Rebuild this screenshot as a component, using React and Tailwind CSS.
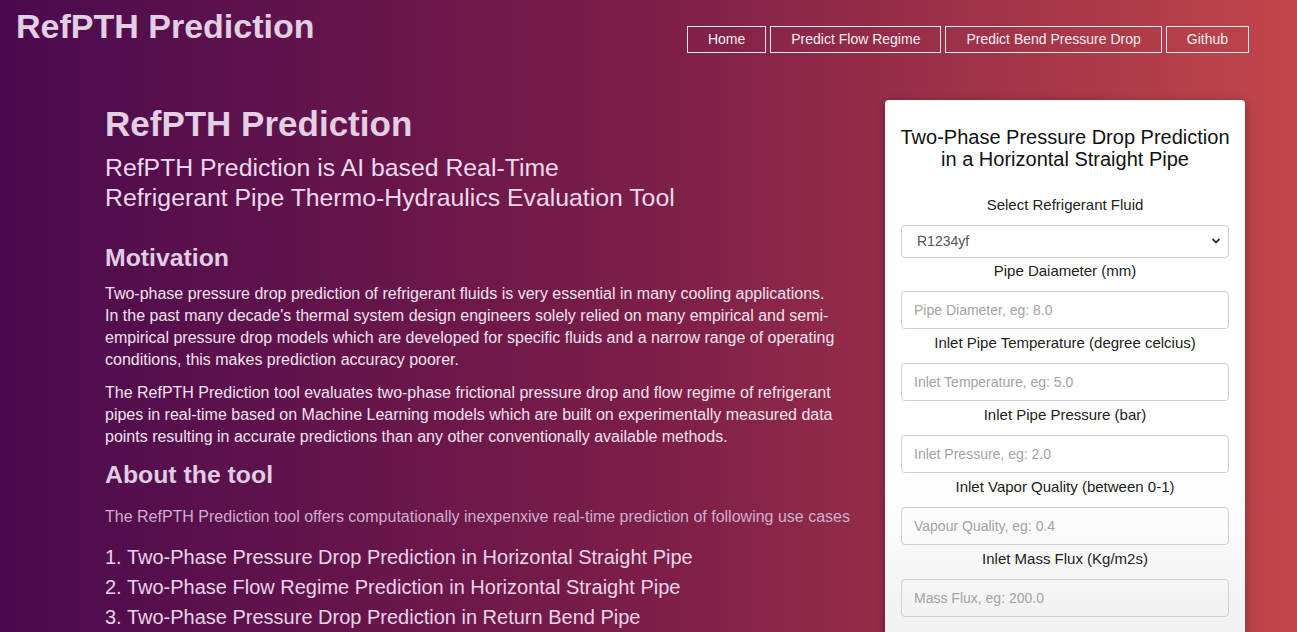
import React from "react";

const labelCls = "text-[15px] leading-[20px] text-[#222] text-center whitespace-nowrap";
const inputCls =
  "w-full h-[38px] rounded-[4px] border border-[#cfcfcf] bg-transparent px-[12px] text-[14px] text-[#555] placeholder:text-[#a3a3a3] outline-none";

function Field({ label, placeholder }) {
  return (
    <>
      <div className={`${labelCls} pt-[4px] pb-[10px]`}>{label}</div>
      <input className={inputCls} placeholder={placeholder} />
    </>
  );
}

export default function App() {
  return (
    <div
      className="min-h-[632px] w-full overflow-hidden bg-[linear-gradient(to_right,#4a0a4e_0%,#7c1e48_50%,#c1464a_100%)]"
      style={{ fontFamily: '"Liberation Sans", Arial, sans-serif', height: 632 }}
    >
      <header className="flex items-start justify-between pl-[16px] pr-[48px]">
        <div className="pt-[8px] text-[34px] font-bold leading-[36px] text-[#e2cfe3]">RefPTH Prediction</div>
        <nav className="mt-[26px] flex gap-[4px]">
          {["Home", "Predict Flow Regime", "Predict Bend Pressure Drop", "Github"].map((t) => (
            <a
              key={t}
              className="h-[27px] border border-[#f0e6ec] px-[20px] text-[14px] leading-[25px] text-[#f6eef2]"
            >
              {t}
            </a>
          ))}
        </nav>
      </header>

      <main className="mt-[47px] flex gap-[20px] pl-[105px]">
        <section className="w-[760px] pt-[4px]">
          <h1 className="text-[35px] font-bold leading-[40px] text-[#e2cfe3]">RefPTH Prediction</h1>
          <p className="mt-[9px] text-[24.8px] leading-[30px] text-[#ecd9ec]">
            RefPTH Prediction is AI based Real-Time
            <br />
            Refrigerant Pipe Thermo-Hydraulics Evaluation Tool
          </p>
          <h2 className="mt-[30px] text-[24.8px] font-bold leading-[30px] text-[#dfcde3]">Motivation</h2>
          <p className="mt-[10px] w-[730px] text-[16px] leading-[22px] text-[#f0e2ef]">
            Two-phase pressure drop prediction of refrigerant fluids is very essential in many cooling applications.
            In the past many decade's thermal system design engineers solely relied on many empirical and semi-
            empirical pressure drop models which are developed for specific fluids and a narrow range of operating
            conditions, this makes prediction accuracy poorer.
          </p>
          <p className="mt-[11px] w-[730px] text-[16px] leading-[22px] text-[#f0e2ef]">
            The RefPTH Prediction tool evaluates two-phase frictional pressure drop and flow regime of refrigerant
            pipes in real-time based on Machine Learning models which are built on experimentally measured data
            points resulting in accurate predictions than any other conventionally available methods.
          </p>
          <h2 className="mt-[12px] text-[24.8px] font-bold leading-[30px] text-[#dfcde3]">About the tool</h2>
          <p className="mt-[16px] text-[16px] leading-[22px] text-[#cdaecd]">
            The RefPTH Prediction tool offers computationally inexpenxive real-time prediction of following use cases
          </p>
          <ol className="mt-[14px] text-[20px] leading-[30px] text-[#e8d4e8]">
            <li>1. Two-Phase Pressure Drop Prediction in Horizontal Straight Pipe</li>
            <li>2. Two-Phase Flow Regime Prediction in Horizontal Straight Pipe</li>
            <li>3. Two-Phase Pressure Drop Prediction in Return Bend Pipe</li>
          </ol>
        </section>

        <aside className="h-[600px] w-[360px] shrink-0 rounded-[4px] bg-[linear-gradient(to_bottom,#ffffff_380px,#f2f2f2_520px)] px-[16px] pt-[26px] shadow-[0_2px_8px_rgba(0,0,0,0.35)]">
          <h3 className="-mx-[10px] whitespace-nowrap text-center text-[20px] leading-[22px] text-[#111]">
            Two-Phase Pressure Drop Prediction
            <br />
            in a Horizontal Straight Pipe
          </h3>
          <div className={`${labelCls} mt-[25px] pb-[10px]`}>Select Refrigerant Fluid</div>
          <div className="relative">
            <select
              className="h-[33px] w-full appearance-none rounded-[4px] border border-[#cfcfcf] bg-white px-[15px] text-[14px] text-[#555] outline-none"
              defaultValue="R1234yf"
            >
              <option>R1234yf</option>
            </select>
            <svg
              className="pointer-events-none absolute right-[8px] top-[12px]"
              width="10"
              height="8"
              viewBox="0 0 10 8"
            >
              <path d="M1.5 2 L5 5.5 L8.5 2" fill="none" stroke="#333" strokeWidth="1.8" />
            </svg>
          </div>
          <div className={`${labelCls} pt-[3px] pb-[10px]`}>Pipe Daiameter (mm)</div>
          <input className={inputCls} placeholder="Pipe Diameter, eg: 8.0" />
          <Field label="Inlet Pipe Temperature (degree celcius)" placeholder="Inlet Temperature, eg: 5.0" />
          <Field label="Inlet Pipe Pressure (bar)" placeholder="Inlet Pressure, eg: 2.0" />
          <Field label="Inlet Vapor Quality (between 0-1)" placeholder="Vapour Quality, eg: 0.4" />
          <Field label="Inlet Mass Flux (Kg/m2s)" placeholder="Mass Flux, eg: 200.0" />
        </aside>
      </main>
    </div>
  );
}
